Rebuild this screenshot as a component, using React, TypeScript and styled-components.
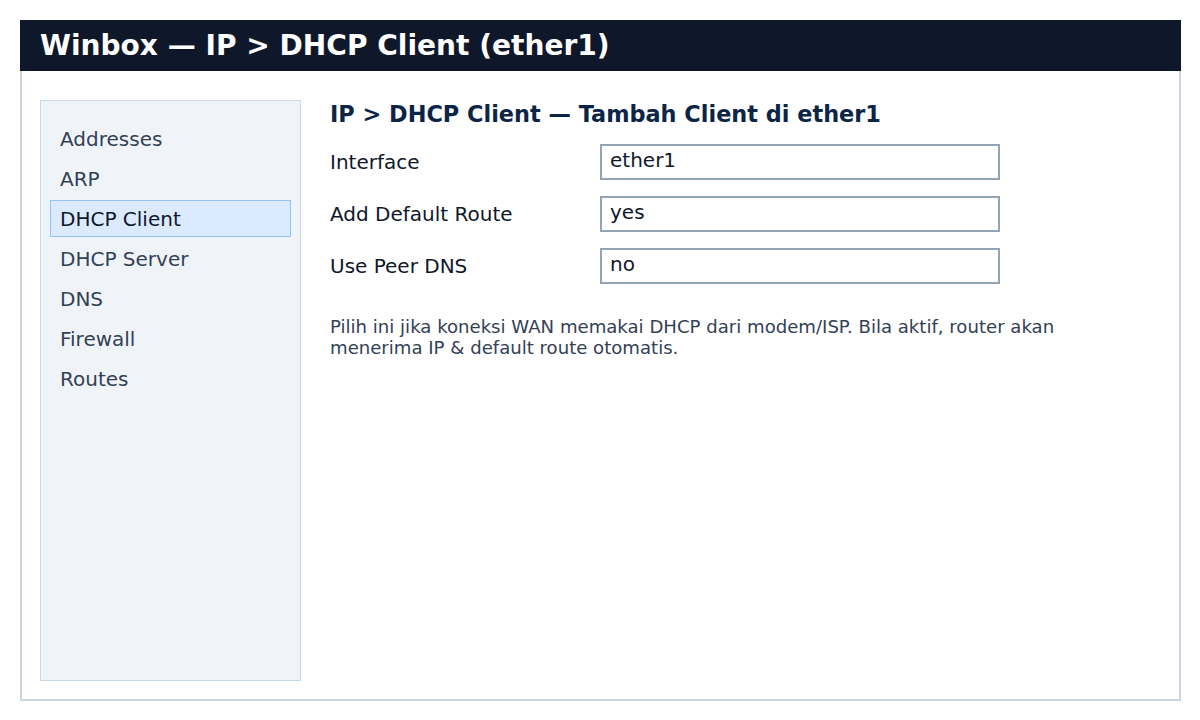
import React from "react";
import styled, { createGlobalStyle } from "styled-components";

const GlobalStyle = createGlobalStyle`
  html, body {
    margin: 0;
    padding: 0;
    background: #ffffff;
  }
  body {
    font-family: "DejaVu Sans", "Noto Sans", sans-serif;
  }
  * { box-sizing: border-box; }
`;

const Page = styled.div`
  padding: 20px 19px 19px 20px;
  width: 1200px;
  height: 720px;
`;

const Window = styled.div`
  display: flex;
  flex-direction: column;
  width: 1161px;
  height: 681px;
`;

const TitleBar = styled.header`
  height: 51px;
  flex: none;
  background: #0f172a;
  color: #ffffff;
  font-weight: 700;
  font-size: 28.05px;
  line-height: 51px;
  padding: 0 20px;
  white-space: nowrap;
`;

const Body = styled.div`
  flex: 1;
  display: flex;
  gap: 29px;
  border: 2px solid #cbd5e1;
  border-top: none;
  padding: 29px 18px 18px 18px;
  min-height: 0;
`;

const Sidebar = styled.nav`
  width: 261px;
  flex: none;
  background: #f0f4f9;
  border: 1px solid #c9d8ea;
  padding: 19px 9px;
  display: flex;
  flex-direction: column;
  gap: 3px;
`;

const NavItem = styled.div<{ $active?: boolean }>`
  height: 37px;
  padding: 7px 9px 5px 9px;
  font-size: 20px;
  line-height: 23px;
  border: 1px solid ${(p) => (p.$active ? "#93c5fd" : "transparent")};
  background: ${(p) => (p.$active ? "#dbeafe" : "transparent")};
  color: ${(p) => (p.$active ? "#0f172a" : "#334155")};
  white-space: nowrap;
`;

const Content = styled.main`
  flex: 1;
  display: flex;
  flex-direction: column;
  padding-top: 1px;
`;

const Heading = styled.h2`
  margin: 0 0 17px 0;
  font-size: 22.4px;
  line-height: 26px;
  font-weight: 700;
  color: #0c2547;
  white-space: nowrap;
`;

const Form = styled.div`
  display: grid;
  grid-template-columns: 270px 400px;
  row-gap: 16px;
  align-items: center;
`;

const Label = styled.div`
  font-size: 20px;
  color: #0f172a;
`;

const Field = styled.div`
  height: 36px;
  border: 2px solid #94a3b8;
  background: #ffffff;
  padding: 2px 8px 0 8px;
  font-size: 20px;
  color: #0f172a;
`;

const Note = styled.p`
  margin: 32px 0 0 0;
  max-width: 760px;
  font-size: 18.1px;
  color: #334155;
`;

const navItems = [
  "Addresses",
  "ARP",
  "DHCP Client",
  "DHCP Server",
  "DNS",
  "Firewall",
  "Routes",
];

const fields: [string, string][] = [
  ["Interface", "ether1"],
  ["Add Default Route", "yes"],
  ["Use Peer DNS", "no"],
];

export default function App() {
  return (
    <>
      <GlobalStyle />
      <Page>
        <Window>
          <TitleBar>Winbox — IP &gt; DHCP Client (ether1)</TitleBar>
          <Body>
            <Sidebar>
              {navItems.map((item) => (
                <NavItem key={item} $active={item === "DHCP Client"}>
                  {item}
                </NavItem>
              ))}
            </Sidebar>
            <Content>
              <Heading>IP &gt; DHCP Client — Tambah Client di ether1</Heading>
              <Form>
                {fields.map(([label, value]) => (
                  <React.Fragment key={label}>
                    <Label>{label}</Label>
                    <Field>{value}</Field>
                  </React.Fragment>
                ))}
              </Form>
              <Note>
                Pilih ini jika koneksi WAN memakai DHCP dari modem/ISP. Bila
                aktif, router akan menerima IP &amp; default route otomatis.
              </Note>
            </Content>
          </Body>
        </Window>
      </Page>
    </>
  );
}
